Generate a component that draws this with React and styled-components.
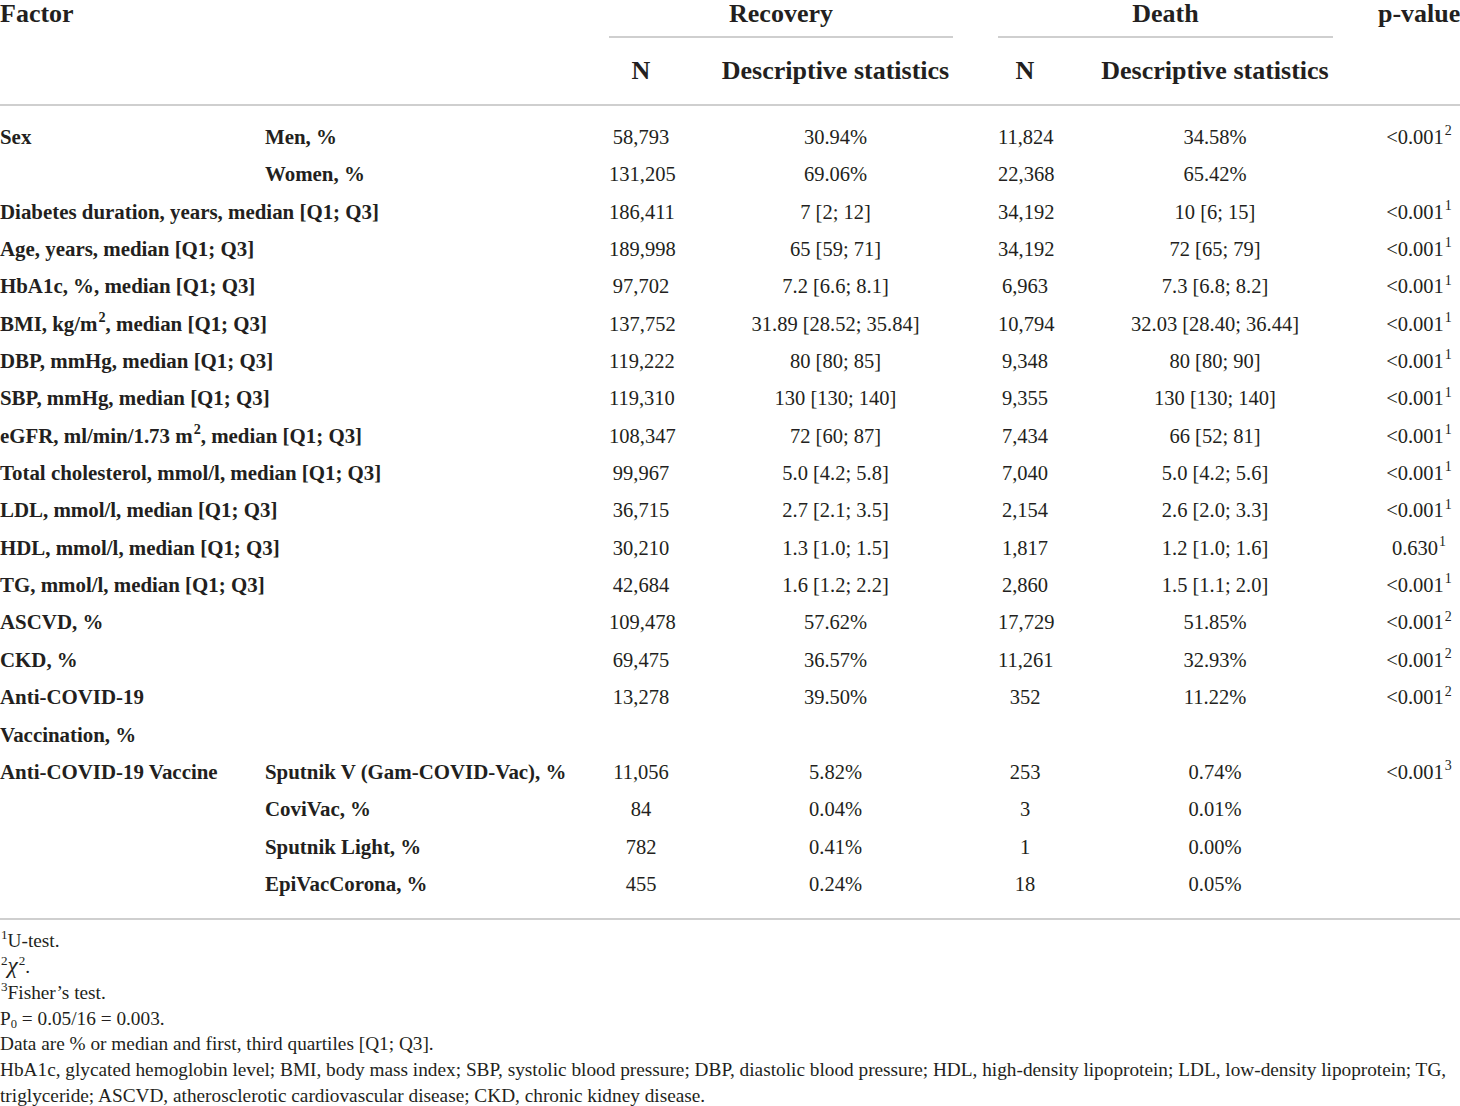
import React from "react";
import styled, { createGlobalStyle } from "styled-components";

const GlobalStyle = createGlobalStyle`
	html, body {
		margin: 0;
		padding: 0;
		background: #fff;
	}
	body {
		font-family: "Liberation Serif", "Times New Roman", serif;
		color: #231f20;
	}
`;

const Page = styled.div`
	width: 1460px;
`;

const Table = styled.table`
	width: 1460px;
	table-layout: fixed;
	border-collapse: collapse;
	border-spacing: 0;
`;

const Head = styled.thead`
	border-bottom: 2px solid #cfcfcf;
`;

const Body = styled.tbody`
	border-bottom: 2px solid #cfcfcf;
	tr:first-child td {
		padding-top: 13px;
	}
	tr:last-child td {
		padding-bottom: 15px;
	}
`;

const Th = styled.th`
	font-size: 26px;
	font-weight: 700;
	padding: 0;
	padding-right: ${(p) => (p.$edge ? "0" : "45px")};
	text-align: ${(p) => p.$align || "center"};
	vertical-align: ${(p) => (p.$top ? "top" : "middle")};
	line-height: 28px;
	height: ${(p) => p.$h || "auto"};
	white-space: nowrap;
`;

const GroupLabel = styled.div`
	padding-bottom: 8px;
	border-bottom: 2px solid #cfcfcf;
`;

const Td = styled.td`
	font-size: ${(p) => (p.$label ? "20.9px" : "20.5px")};
	font-weight: ${(p) => (p.$label ? 700 : 400)};
	line-height: 37.35px;
	padding: 0;
	padding-right: ${(p) => (p.$edge ? "0" : "45px")};
	text-align: ${(p) => (p.$label ? "left" : "center")};
	vertical-align: top;
	white-space: nowrap;
`;

const Sup = styled.sup`
	font-size: 0.68em;
	line-height: 0;
	vertical-align: 0.62em;
	margin-left: 1px;
`;

const Sub = styled.sub`
	font-size: 0.65em;
	line-height: 0;
	vertical-align: -0.25em;
`;

const Notes = styled.div`
	padding-top: 8px;
	font-size: 19.3px;
	line-height: 25.8px;
`;

const Note = styled.div``;

const Chi = styled.span`
	font-size: 1.2em;
	font-style: italic;
	line-height: 0;
`;

const Q = " [Q1; Q3]";

const rows = [
	{ a: "Sex", b: "Men, %", v: ["58,793", "30.94%", "11,824", "34.58%"], p: "<0.001", s: "2" },
	{ b: "Women, %", v: ["131,205", "69.06%", "22,368", "65.42%"] },
	{ l: "Diabetes duration, years, median" + Q, v: ["186,411", "7 [2; 12]", "34,192", "10 [6; 15]"], p: "<0.001", s: "1" },
	{ l: "Age, years, median" + Q, v: ["189,998", "65 [59; 71]", "34,192", "72 [65; 79]"], p: "<0.001", s: "1" },
	{ l: "HbA1c, %, median" + Q, v: ["97,702", "7.2 [6.6; 8.1]", "6,963", "7.3 [6.8; 8.2]"], p: "<0.001", s: "1" },
	{ l: <>BMI, kg/m<Sup>2</Sup>, median{Q}</>, v: ["137,752", "31.89 [28.52; 35.84]", "10,794", "32.03 [28.40; 36.44]"], p: "<0.001", s: "1" },
	{ l: "DBP, mmHg, median" + Q, v: ["119,222", "80 [80; 85]", "9,348", "80 [80; 90]"], p: "<0.001", s: "1" },
	{ l: "SBP, mmHg, median" + Q, v: ["119,310", "130 [130; 140]", "9,355", "130 [130; 140]"], p: "<0.001", s: "1" },
	{ l: <>eGFR, ml/min/1.73 m<Sup>2</Sup>, median{Q}</>, v: ["108,347", "72 [60; 87]", "7,434", "66 [52; 81]"], p: "<0.001", s: "1" },
	{ l: "Total cholesterol, mmol/l, median" + Q, v: ["99,967", "5.0 [4.2; 5.8]", "7,040", "5.0 [4.2; 5.6]"], p: "<0.001", s: "1" },
	{ l: "LDL, mmol/l, median" + Q, v: ["36,715", "2.7 [2.1; 3.5]", "2,154", "2.6 [2.0; 3.3]"], p: "<0.001", s: "1" },
	{ l: "HDL, mmol/l, median" + Q, v: ["30,210", "1.3 [1.0; 1.5]", "1,817", "1.2 [1.0; 1.6]"], p: "0.630", s: "1" },
	{ l: "TG, mmol/l, median" + Q, v: ["42,684", "1.6 [1.2; 2.2]", "2,860", "1.5 [1.1; 2.0]"], p: "<0.001", s: "1" },
	{ l: "ASCVD, %", v: ["109,478", "57.62%", "17,729", "51.85%"], p: "<0.001", s: "2" },
	{ l: "CKD, %", v: ["69,475", "36.57%", "11,261", "32.93%"], p: "<0.001", s: "2" },
	{ l: <>Anti-COVID-19<br />Vaccination, %</>, v: ["13,278", "39.50%", "352", "11.22%"], p: "<0.001", s: "2" },
	{ a: "Anti-COVID-19 Vaccine", b: "Sputnik V (Gam-COVID-Vac), %", v: ["11,056", "5.82%", "253", "0.74%"], p: "<0.001", s: "3" },
	{ b: "CoviVac, %", v: ["84", "0.04%", "3", "0.01%"] },
	{ b: "Sputnik Light, %", v: ["782", "0.41%", "1", "0.00%"] },
	{ b: "EpiVacCorona, %", v: ["455", "0.24%", "18", "0.05%"] },
];

function Row({ row }) {
	return (
		<tr>
			{row.l !== undefined ? (
				<Td $label colSpan={2}>{row.l}</Td>
			) : (
				<>
					<Td $label>{row.a}</Td>
					<Td $label>{row.b}</Td>
				</>
			)}
			{row.v.map((x, i) => (
				<Td key={i}>{x}</Td>
			))}
			<Td $edge>
				{row.p}
				{row.s && <Sup>{row.s}</Sup>}
			</Td>
		</tr>
	);
}

export default function App() {
	return (
		<Page>
			<GlobalStyle />
			<Table>
				<colgroup>
					<col style={{ width: 265 }} />
					<col style={{ width: 344 }} />
					<col style={{ width: 109 }} />
					<col style={{ width: 280 }} />
					<col style={{ width: 99 }} />
					<col style={{ width: 281 }} />
					<col style={{ width: 82 }} />
				</colgroup>
				<Head>
					<tr>
						<Th rowSpan={2} colSpan={2} $align="left" $top>
							Factor
						</Th>
						<Th colSpan={2} $top $h="38px">
							<GroupLabel>Recovery</GroupLabel>
						</Th>
						<Th colSpan={2} $top $h="38px">
							<GroupLabel>Death</GroupLabel>
						</Th>
						<Th rowSpan={2} $edge $top>
							p-value
						</Th>
					</tr>
					<tr>
						<Th $h="66px">N</Th>
						<Th $h="66px">Descriptive statistics</Th>
						<Th $h="66px">N</Th>
						<Th $h="66px">Descriptive statistics</Th>
					</tr>
				</Head>
				<Body>
					{rows.map((r, i) => (
						<Row key={i} row={r} />
					))}
				</Body>
			</Table>
			<Notes>
				<Note>
					<Sup>1</Sup>U-test.
				</Note>
				<Note>
					<Sup>2</Sup>
					<Chi>χ</Chi>
					<Sup>2</Sup>.
				</Note>
				<Note>
					<Sup>3</Sup>Fisher’s test.
				</Note>
				<Note>
					P<Sub>0</Sub> = 0.05/16 = 0.003.
				</Note>
				<Note>Data are % or median and first, third quartiles [Q1; Q3].</Note>
				<Note>
					HbA1c, glycated hemoglobin level; BMI, body mass index; SBP, systolic blood pressure; DBP, diastolic blood
					pressure; HDL, high-density lipoprotein; LDL, low-density lipoprotein; TG, triglyceride; ASCVD, atherosclerotic
					cardiovascular disease; CKD, chronic kidney disease.
				</Note>
			</Notes>
		</Page>
	);
}
